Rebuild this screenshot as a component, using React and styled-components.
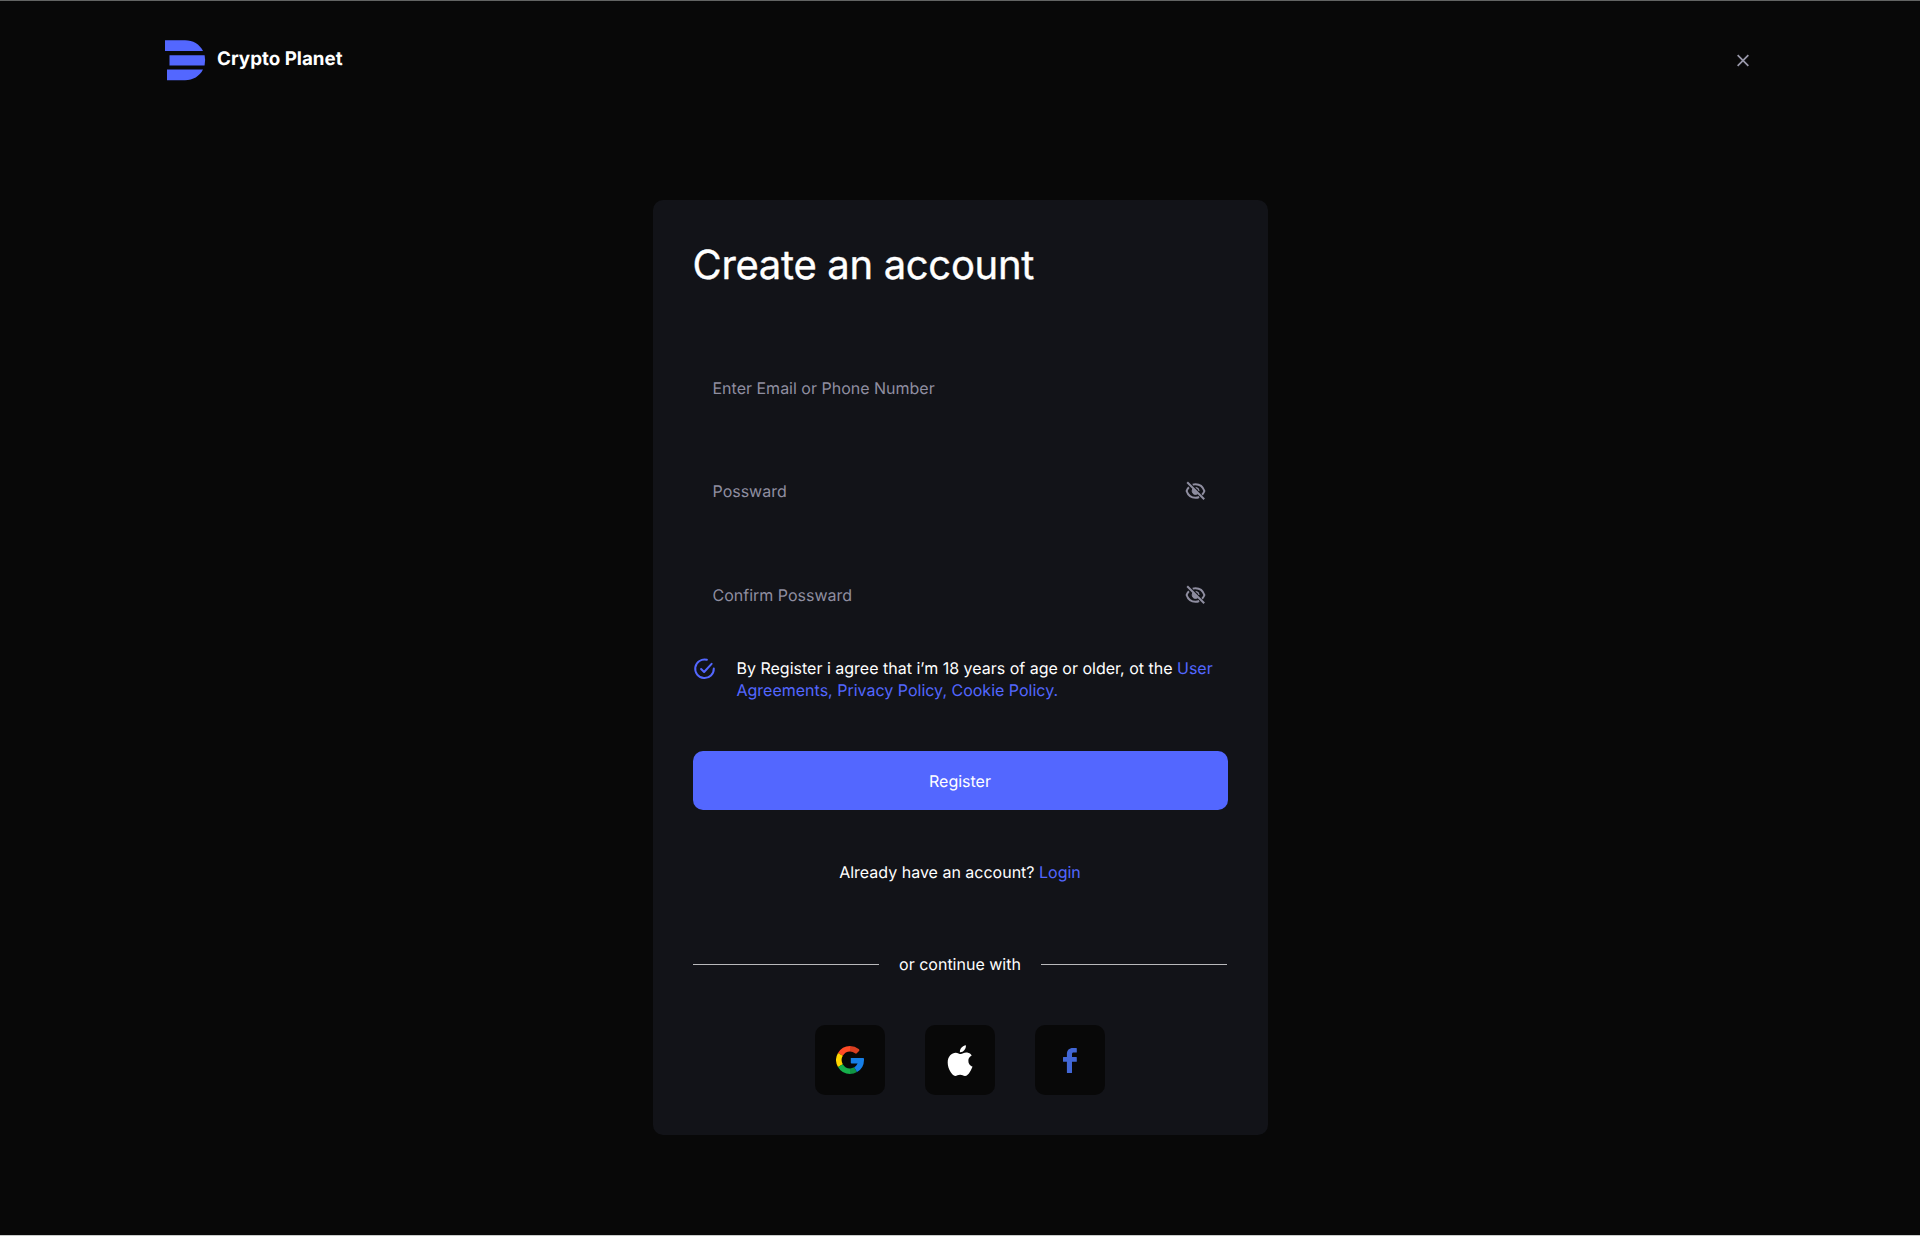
import React from "react";
import styled, { createGlobalStyle } from "styled-components";

const GlobalStyle = createGlobalStyle`
  *, *::before, *::after { box-sizing: border-box; }
  body { margin: 0; background: #080808; }
  button, input { font: inherit; letter-spacing: inherit; text-rendering: inherit; border: 0; padding: 0; margin: 0; }
`;

const Page = styled.div`
  height: 1236px;
  display: flex;
  flex-direction: column;
  align-items: center;
  background: #080808;
  border-top: 1px solid #626463;
  border-bottom: 1px solid #c9cbca;
  color: #fff;
  font-family: Inter, "Liberation Sans", sans-serif;
  font-size: 16px;
  line-height: 22px;
  text-rendering: geometricPrecision;
`;

const Header = styled.header`
  width: 1590px;
  height: 199px;
  padding: 39px 0 0;
  display: flex;
  align-items: flex-start;
  justify-content: space-between;
`;

const Brand = styled.div`
  display: flex;
  gap: 11px;
  font-size: 18.8px;
  font-weight: 700;
  line-height: 38px;
`;

const CloseButton = styled.button`
  width: 24px;
  height: 24px;
  margin: 8px 0 0;
  background: none;
  color: #9a99ab;
`;

const Card = styled.main`
  width: 615px;
  height: 935px;
  padding: 41px 40px 40px;
  display: flex;
  flex-direction: column;
  background: #121318;
  border-radius: 10px;
`;

const Title = styled.h1`
  margin: 0 0 58.6px;
  font-size: 40px;
  font-weight: 400;
  line-height: 48px;
  letter-spacing: -0.32px;
  -webkit-text-stroke: 0.35px currentColor;
`;

const Fields = styled.div`
  display: flex;
  flex-direction: column;
  gap: 23.5px;
`;

const Field = styled.label`
  height: 80px;
  padding: 0 20px;
  display: flex;
  align-items: center;
  justify-content: space-between;
  color: #8f8ea0;
`;

const Input = styled.input`
  flex: 1;
  height: 22px;
  background: none;
  color: #fff;
  outline: none;
  &::placeholder { color: #8f8ea0; opacity: 1; }
`;

const Agreement = styled.div`
  margin-top: 22.5px;
  display: flex;
  gap: 20px;
`;

const AgreementText = styled.p`
  margin: 0;
  width: 492px;
`;

const Link = styled.a`
  color: #5367ff;
`;

const RegisterButton = styled.button`
  height: 60px;
  margin-top: 50px;
  border-radius: 10px;
  background: #5367ff;
  color: #fff;
`;

const LoginLine = styled.p`
  margin: 51px 0 0;
  text-align: center;
`;

const Divider = styled.div`
  margin-top: 70px;
  display: flex;
  align-items: center;
  justify-content: space-between;
`;

const Rule = styled.span`
  width: 186px;
  height: 1px;
  background: #b9b9bb;
`;

const Socials = styled.div`
  margin-top: 50px;
  display: flex;
  justify-content: center;
  gap: 40px;
`;

const SocialButton = styled.button`
  width: 70px;
  height: 70px;
  display: flex;
  align-items: center;
  justify-content: center;
  border-radius: 10px;
  background: #080808;
`;

const Icon = styled.svg`
  display: block;
  flex: none;
  width: ${(p) => p.$w}px;
  height: ${(p) => p.$h || p.$w}px;
`;

const Logo = () => (
  <Icon $w={41} viewBox="0 0 41 41" fill="#5367ff">
    <path d="M0 0.2H20C28 0.2 34.5 4 38 11H0Z" />
    <path d="M4.5 15.2H39.6Q40.7 20.2 39.6 25.4H4.5Z" />
    <path d="M2 29.6H38C34.5 36.4 28 40.3 20 40.3H2Z" />
  </Icon>
);

const CloseIcon = () => (
  <Icon $w={24} viewBox="0 0 24 24" fill="currentColor">
    <path d="M19 6.41L17.59 5 12 10.59 6.41 5 5 6.41 10.59 12 5 17.59 6.41 19 12 13.41 17.59 19 19 17.59 13.41 12z" transform="translate(1.8 2.3) scale(.85)" />
  </Icon>
);

const EyeOffIcon = () => (
  <Icon $w={24} viewBox="0.5 0 24 24" fill="none" stroke="currentColor" strokeWidth="2">
    <path d="M9.2 5.6Q10.5 5.2 12 5.2C16.2 5.2 19.5 7.8 20.9 12Q20.2 14.1 18.6 15.7" />
    <path d="M5.4 8.2Q3.8 9.8 3.1 12C4.5 16.2 7.8 18.8 12 18.8Q14 18.8 15.6 18" />
    <path d="M12.2 8.5A3.5 3.5 0 0 1 15.6 12M9.2 10C7.9 12.4 9.3 15.5 12 15.5Q13.2 15.5 14 14.8L9.2 10Z" fill="currentColor" strokeWidth="1" />
    <path d="M3.7 3.3L20.7 20.3" />
  </Icon>
);

const CheckIcon = () => (
  <Icon $w={24} viewBox="0.4 0 24 24" fill="none" stroke="#5367ff" strokeWidth="2" strokeLinecap="round" strokeLinejoin="round">
    <path d="M14.3 2.8A9.3 9.3 0 1 0 21.2 11.5" />
    <path d="M8.5 12L11.5 15L19 6.8" />
  </Icon>
);

const GoogleIcon = () => (
  <Icon $w={28} viewBox="0 0 28 28">
    <path fill="#ff4b26" d="M2 7A14 14 0 0 1 14 0V5.6A8.4 8.4 0 0 0 6.8 9.8Z" />
    <path fill="#d93f21" d="M14 0A14 14 0 0 1 22.7 3A1.6 1.6 0 0 1 22.8 5.3L21 7.1A1.5 1.5 0 0 1 19 7.3A8.4 8.4 0 0 0 14 5.6Z" />
    <path fill="#ffd500" d="M2 7A14 14 0 0 0 2 21L6.8 18.2A8.4 8.4 0 0 1 6.8 9.8Z" />
    <path fill="#16b04b" d="M2 21A14 14 0 0 0 14 28V22.4A8.4 8.4 0 0 1 6.8 18.2Z" />
    <path fill="#119444" d="M14 28A14 14 0 0 0 21 26.1L18.2 21.3A8.4 8.4 0 0 1 14 22.4Z" />
    <path fill="#167ee6" d="M14.8 12H27.2A.8 .8 0 0 1 28 12.8V14A14 14 0 0 1 21 26.1L18.2 21.3A8.4 8.4 0 0 0 21.6 17.5H15.6A.8 .8 0 0 1 14.8 16.7Z" />
  </Icon>
);

const AppleIcon = () => (
  <Icon $w={26} $h={31} viewBox="-0.5 0 26 31" fill="#fff">
    <path d="M18.4 0.2C18.8 3.7 15.8 7.4 12.4 7.2C12 3.8 15.2 0.5 18.4 0.2Z" />
    <path d="M24.2 10.6C23.6 11 20.9 12.5 20.9 15.9C20.9 19.9 24.4 21.3 25 21.5C24.7 22.5 23.8 24.8 22.2 27.2C20.9 29.1 19.5 30.9 17.5 30.9S14.9 29.8 12.6 29.8C10.4 29.8 9.5 30.9 7.7 30.9S4.6 29.2 3.1 27C1.3 24.5 0.2 21 0.2 17.6C0.2 11.1 4.3 7.7 8.2 7.7C10.3 7.7 12.1 9.1 13.3 9.1C14.6 9.1 16.5 7.6 18.7 7.6C19.7 7.6 22.5 7.8 24.2 10.6Z" />
  </Icon>
);

const FacebookIcon = () => (
  <Icon $w={14} $h={25} viewBox="0 0 14 25" fill="#4267d6">
    <path d="M3.9 24.5V13.8H.5A.5 .5 0 0 1 0 13.3V9.5A.5 .5 0 0 1 .5 9H3.9V6C3.9 2.3 6.2 0 9.9 0H13.3A.5 .5 0 0 1 13.8 .5V4A.5 .5 0 0 1 13.3 4.5H10.8C9.4 4.5 9 5.1 9 6.3V9H13.3A.5 .5 0 0 1 13.8 9.5V13.3A.5 .5 0 0 1 13.3 13.8H9V24.5A.5 .5 0 0 1 8.5 25H4.4A.5 .5 0 0 1 3.9 24.5Z" />
  </Icon>
);

const socials = [
  { name: "Google", Glyph: GoogleIcon },
  { name: "Apple", Glyph: AppleIcon },
  { name: "Facebook", Glyph: FacebookIcon },
];

export default function App() {
  return (
    <Page>
      <GlobalStyle />
      <Header>
        <Brand>
          <Logo />
          Crypto Planet
        </Brand>
        <CloseButton aria-label="Close"><CloseIcon /></CloseButton>
      </Header>
      <Card>
        <Title>Create an account</Title>
        <Fields>
          <Field><Input type="text" placeholder="Enter Email or Phone Number" /></Field>
          <Field><Input type="password" placeholder="Possward" /><EyeOffIcon /></Field>
          <Field><Input type="password" placeholder="Confirm Possward" /><EyeOffIcon /></Field>
        </Fields>
        <Agreement>
          <CheckIcon />
          <AgreementText>
            By Register i agree that i’m 18 years of age or older, ot the{" "}
            <Link>User</Link> <Link>Agreements, Privacy Policy, Cookie Policy.</Link>
          </AgreementText>
        </Agreement>
        <RegisterButton>Register</RegisterButton>
        <LoginLine>Already have an account? <Link>Login</Link></LoginLine>
        <Divider>
          <Rule />
          or continue with
          <Rule />
        </Divider>
        <Socials>
          {socials.map(({ name, Glyph }) => (
            <SocialButton key={name} aria-label={name}><Glyph /></SocialButton>
          ))}
        </Socials>
      </Card>
    </Page>
  );
}
